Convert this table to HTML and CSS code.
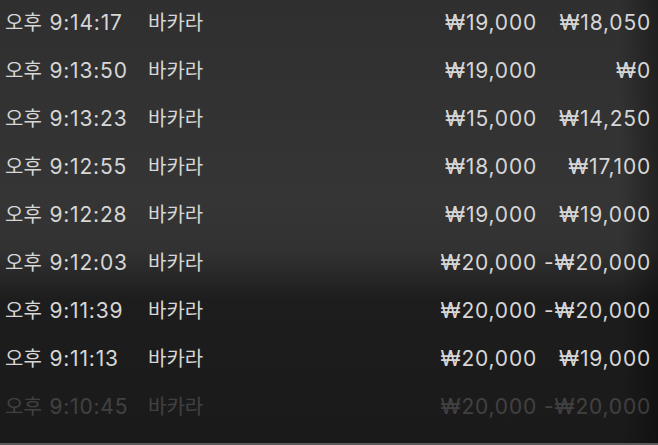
FILE: index.html
```html
<!DOCTYPE html>
<html lang="ko">

<head>
    <meta charset="UTF-8">
    <meta name="viewport" content="width=device-width, initial-scale=1.0">
    <title>베팅 내역</title>
    <link rel="stylesheet" href="styles.css">
</head>

<body>
    <div class="history">
        <div class="row">
            <span class="time">오후 <b>9:14:17</b></span>
            <span class="game">바카라</span>
            <span class="bet">₩19,000</span>
            <span class="result">₩18,050</span>
        </div>
        <div class="row">
            <span class="time">오후 <b>9:13:50</b></span>
            <span class="game">바카라</span>
            <span class="bet">₩19,000</span>
            <span class="result">₩0</span>
        </div>
        <div class="row">
            <span class="time">오후 <b>9:13:23</b></span>
            <span class="game">바카라</span>
            <span class="bet">₩15,000</span>
            <span class="result">₩14,250</span>
        </div>
        <div class="row">
            <span class="time">오후 <b>9:12:55</b></span>
            <span class="game">바카라</span>
            <span class="bet">₩18,000</span>
            <span class="result">₩17,100</span>
        </div>
        <div class="row">
            <span class="time">오후 <b>9:12:28</b></span>
            <span class="game">바카라</span>
            <span class="bet">₩19,000</span>
            <span class="result">₩19,000</span>
        </div>
        <div class="row">
            <span class="time">오후 <b>9:12:03</b></span>
            <span class="game">바카라</span>
            <span class="bet">₩20,000</span>
            <span class="result">-₩20,000</span>
        </div>
        <div class="row">
            <span class="time">오후 <b>9:11:39</b></span>
            <span class="game">바카라</span>
            <span class="bet">₩20,000</span>
            <span class="result">-₩20,000</span>
        </div>
        <div class="row">
            <span class="time">오후 <b>9:11:13</b></span>
            <span class="game">바카라</span>
            <span class="bet">₩20,000</span>
            <span class="result">₩19,000</span>
        </div>
        <div class="row faded">
            <span class="time">오후 <b>9:10:45</b></span>
            <span class="game">바카라</span>
            <span class="bet">₩20,000</span>
            <span class="result">-₩20,000</span>
        </div>
    </div>
</body>

</html>
```

FILE: styles.css
```css
html,
body {
    height: 100%;
}

body {
    margin: 0;
    overflow: hidden;
    font-family: Inter, "Noto Sans CJK KR", sans-serif;
    font-size: 20px;
    color: #d6d6d6;
    background:
        linear-gradient(to right, rgba(0, 0, 0, 0) 620px, rgba(0, 0, 0, 0.35) 658px),
        linear-gradient(to bottom, #2f2f2f 0, #353535 200px, #323232 250px, #1e1d1d 300px, #1b1a1a 100%);
    box-sizing: border-box;
    border-bottom: 2px solid #5a5a5a;
}

.history {
    margin-top: -1px;
    padding: 0 8px 0 5px;
}

.row {
    display: grid;
    grid-template-columns: 143px 1fr auto 114px;
    height: 48px;
    line-height: 48px;
    white-space: nowrap;
}

.time b,
.bet,
.result {
    font-weight: normal;
    font-size: 21px;
    letter-spacing: 0.8px;
}

.time b {
    margin-left: 2px;
}

.bet,
.result {
    text-align: right;
    margin-right: -1px;
}

.faded {
    opacity: 0.2;
}
```
